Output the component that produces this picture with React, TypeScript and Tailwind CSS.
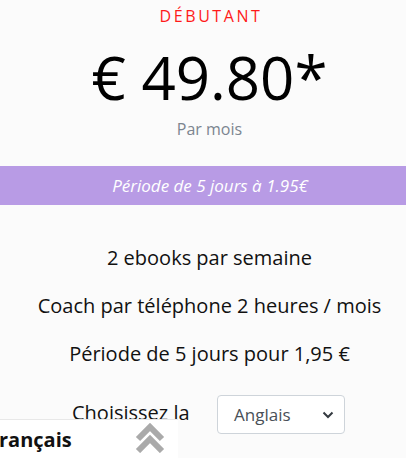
import React from 'react';

const features = [
  '2 ebooks par semaine',
  'Coach par téléphone 2 heures / mois',
  'Période de 5 jours pour 1,95 €',
];

const DoubleChevronUp: React.FC = () => (
  <svg width="30" height="30" viewBox="0 0 30 30" fill="none">
    <path d="M3 16 L15 4 L27 16" stroke="#aaaaaa" strokeWidth="6" strokeLinecap="butt" strokeLinejoin="miter" />
    <path d="M3 28 L15 16 L27 28" stroke="#aaaaaa" strokeWidth="6" strokeLinecap="butt" strokeLinejoin="miter" />
  </svg>
);

export default function App() {
  return (
    <div
      className="relative h-[458px] w-[406px] overflow-hidden bg-[#fbfbfb] text-black"
      style={{ fontFamily: '"Open Sans", "Noto Sans", sans-serif' }}
    >
      <div className="flex flex-col items-center pl-[13px] pt-[5px]">
        <div className="pl-[3px] text-[16px] leading-[22px] tracking-[0.16em] text-[#ff1a1a]">DÉBUTANT</div>
        <div className="mt-[15px] text-[60px] leading-[70px]">€ 49.80*</div>
        <div className="mt-[6px] text-[16px] leading-[22px] text-[#7c8590]">Par mois</div>
      </div>

      <div className="mt-[26px] flex h-[39px] items-center justify-center bg-[#b89be5] pl-[14px] text-[17px] italic text-white">
        Période de 5 jours à 1.95€
      </div>

      <div className="mt-[40px] flex flex-col items-center gap-[22px] pl-[13px] text-[20px] leading-[26px] text-[#111]">
        {features.map((f) => (
          <div key={f}>{f}</div>
        ))}
      </div>

      <div className="mt-[28px] flex items-start pl-[72px]">
        <div className="w-[145px] pt-[4px] text-[20px] leading-[27px] text-[#111]">Choisissez la langue</div>
        <div className="flex h-[39px] w-[128px] items-center justify-between rounded-[4px] border border-[#ced4da] bg-white pl-[16px] pr-[10px] text-[17px] text-[#495057]">
          <span>Anglais</span>
          <svg width="12" height="8" viewBox="0 0 12 8" fill="none">
            <path d="M1.5 1.5 L6 6 L10.5 1.5" stroke="#343a40" strokeWidth="2" />
          </svg>
        </div>
      </div>

      <div className="absolute bottom-0 left-0 flex h-[39px] w-[178px] items-center border-t border-[#e8e8e8] bg-white">
        <span className="-ml-[12px] pt-[2px] text-[20px] font-bold text-[#111]">Français</span>
        <span className="absolute left-[135px] top-[3px]">
          <DoubleChevronUp />
        </span>
      </div>
    </div>
  );
}
